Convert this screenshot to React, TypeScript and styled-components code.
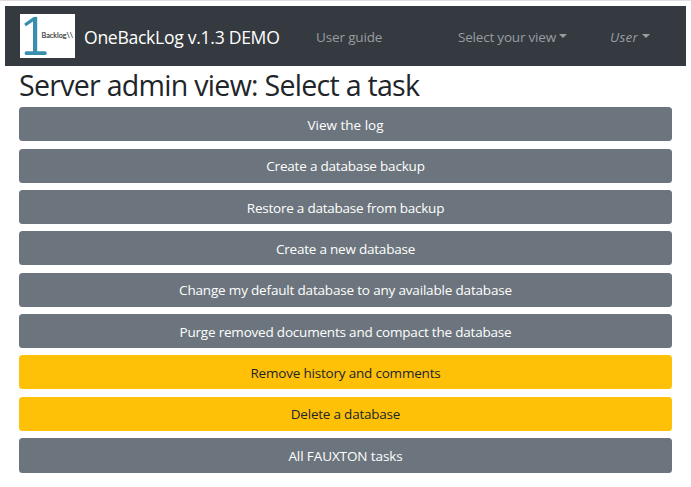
import React from "react";
import styled, { createGlobalStyle } from "styled-components";

const GlobalStyle = createGlobalStyle`
  *, *::before, *::after { box-sizing: border-box; }
  body {
    margin: 0;
    background: #fff;
    color: #212529;
    font-family: "Segoe UI", "Open Sans", "Noto Sans", sans-serif;
    font-size: 14px;
  }
`;

const Page = styled.div`
  height: 487px;
  border-top: 1px solid #dedede;
  padding: 5px 5px 0;
  overflow: hidden;
`;

const Navbar = styled.nav`
  display: flex;
  align-items: center;
  height: 60px;
  padding: 0 35px 0 15px;
  background: #343a40;
`;

const Logo = styled.svg`
  display: block;
  flex: none;
  width: 55px;
  height: 44px;
`;

const Brand = styled.a`
  margin-left: 9px;
  width: 232px;
  color: #fff;
  font-size: 17.6px;
  letter-spacing: -0.3px;
  line-height: 24px;
  white-space: nowrap;
  padding-top: 2px;
`;

const NavLink = styled.a<{ $width?: number; $italic?: boolean; $spacing?: number }>`
  flex: none;
  display: flex;
  align-items: center;
  width: ${(p) => (p.$width ? `${p.$width}px` : "auto")};
  color: #9a9da0;
  font-size: 13.5px;
  font-style: ${(p) => (p.$italic ? "italic" : "normal")};
  letter-spacing: ${(p) => p.$spacing ?? 0}px;
  line-height: 20px;
  white-space: nowrap;
  padding-top: 1px;
`;

const Caret = styled.span`
  margin: 0 0 2px 3.5px;
  border: 4px solid transparent;
  border-top-color: currentColor;
  border-bottom: 0;
`;

const Main = styled.main`
  padding: 0 14px;
`;

const Title = styled.h2`
  margin: 0;
  height: 41.47px;
  font-size: 28.6px;
  font-weight: 400;
  line-height: 38px;
  letter-spacing: -0.74px;
  white-space: nowrap;
`;

const TaskList = styled.div`
  display: flex;
  flex-direction: column;
  gap: 7.32px;
  width: 653px;
`;

const TaskButton = styled.button<{ $warning?: boolean; $spacing: number }>`
  height: 34.02px;
  border: 0;
  border-radius: 3.5px;
  padding: 1.3px 0 0;
  background: ${(p) => (p.$warning ? "#ffc107" : "#6c757d")};
  color: ${(p) => (p.$warning ? "#212529" : "#fff")};
  font-family: inherit;
  font-size: 13.5px;
  line-height: 20px;
  letter-spacing: ${(p) => p.$spacing}px;
  text-align: center;

  &:last-child {
    height: 34.5px;
  }
`;

const tasks = [
  { label: "View the log", spacing: 0 },
  { label: "Create a database backup", spacing: -0.2 },
  { label: "Restore a database from backup", spacing: -0.23 },
  { label: "Create a new database", spacing: -0.22 },
  { label: "Change my default database to any available database", spacing: -0.18 },
  { label: "Purge removed documents and compact the database", spacing: -0.2 },
  { label: "Remove history and comments", spacing: -0.2, warning: true },
  { label: "Delete a database", spacing: -0.22, warning: true },
  { label: "All FAUXTON tasks", spacing: -0.1 },
];

export default function App() {
  return (
    <>
      <GlobalStyle />
      <Page>
        <Navbar>
          <Logo viewBox="0 0 55 44" aria-label="OneBackLog logo">
            <rect width="55" height="44" fill="#fff" />
            <path d="M4.4 9.6L13.2 3.2Q15 2.2 17.2 3V37.2H25.2Q26.8 37.5 26.8 39.2Q26.8 41 25.2 41H6Q4.6 41 4.6 39.2Q4.6 37.5 6 37.2H13V7.6L6.3 12Q4.7 12.4 4.4 9.6Z" fill="#398eb0" />
            <text x="21.5" y="23.7" fill="#333" fontFamily="Lato, sans-serif" fontSize="7.6" fontWeight="400" stroke="#333" strokeWidth="0.15" textLength="31.5" lengthAdjust="spacingAndGlyphs">Backlog\\</text>
          </Logo>
          <Brand>OneBackLog v.1.3 DEMO</Brand>
          <NavLink $width={142} $spacing={-0.15}>User guide</NavLink>
          <NavLink $width={152} $spacing={-0.2}>Select your view<Caret /></NavLink>
          <NavLink $italic $spacing={0.3}>User<Caret /></NavLink>
        </Navbar>
        <Main>
          <Title>Server admin view: Select a task</Title>
          <TaskList>
            {tasks.map((t) => (
              <TaskButton key={t.label} $warning={t.warning} $spacing={t.spacing}>
                {t.label}
              </TaskButton>
            ))}
          </TaskList>
        </Main>
      </Page>
    </>
  );
}
